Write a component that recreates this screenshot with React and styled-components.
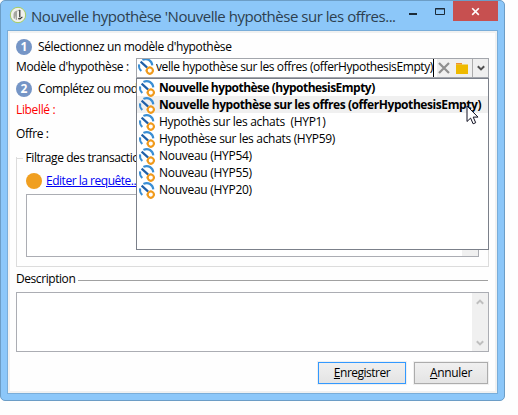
import React from "react";
import styled, { createGlobalStyle } from "styled-components";

const GlobalStyle = createGlobalStyle`
  * { box-sizing: border-box; }
  body { margin: 0; background: #fefefe; }
`;

const Dialog = styled.div`
  width: 505px;
  height: 401px;
  display: flex;
  flex-direction: column;
  padding: 0 6px 6px;
  background: #8cc7f9;
  border: 1px solid #6c9dc6;
  border-radius: 5px;
  font: 12px/17px "Open Sans", "Noto Sans", sans-serif;
  color: #000;
`;

const TitleBar = styled.header`
  flex: none;
  height: 29px;
  display: flex;
  align-items: flex-start;
`;

const AppIcon = styled.svg`
  width: 18px;
  height: 18px;
  margin: 5px 4px 0 2px;
  flex: none;
`;

const Title = styled.h1`
  margin: 4px 0 0;
  width: 390px;
  font-size: 15px;
  font-weight: 400;
  line-height: 22px;
  letter-spacing: -0.47px;
  white-space: pre;
  color: #2d3f50;
`;

const Controls = styled.svg`
  width: 93px;
  height: 20px;
  flex: none;
  margin-left: 4px;
`;

const Client = styled.main`
  flex: 1;
  display: flex;
  flex-direction: column;
  background: #fefefe;
  border: 1px solid #79add9;
  box-shadow: inset 0 0 0 2px #f0f1f1;
  padding: 7px 8px 0;
`;

const Text = styled.span`
  white-space: pre;
  letter-spacing: ${(p) => p.$track ?? -0.4}px;
  color: ${(p) => p.$color ?? "inherit"};
`;

const Step = styled.div`
  display: flex;
  align-items: flex-start;
  gap: 6px;
  height: 17px;
`;

const StepNumber = styled.span`
  width: 16px;
  height: 16px;
  margin-top: 1px;
  border-radius: 50%;
  background: #7595c6;
  color: #fff;
  font-weight: 700;
  font-size: 12px;
  line-height: 16px;
  text-align: center;
`;

const Field = styled.div`
  display: flex;
  height: ${(p) => p.$height ?? 17}px;
  margin-top: ${(p) => p.$gap}px;
`;

const FieldLabel = styled.div`
  width: 120px;
  flex: none;
`;

const Combo = styled.div`
  position: relative;
  flex: 1;
  display: flex;
  height: 20px;
  border: 1px solid #a3a6ac;
  background: #fff;
`;

const ComboValue = styled.div`
  width: 300px;
  display: flex;
  gap: 2px;
  overflow: hidden;
  padding-left: 1px;
`;

const ValueWindow = styled.div`
  width: 277px;
  height: 18px;
  margin-top: -1px;
  display: flex;
  justify-content: flex-end;
  overflow: hidden;
`;

const Caret = styled.span`
  width: 1px;
  height: 18px;
  background: #000;
  margin-left: -2px;
`;

const ComboTools = styled.div`
  width: 35px;
  display: flex;
  align-items: center;
  gap: 5px;
  padding: 0 0 0 1px;
  background: #f0f0f0;
`;

const ComboArrow = styled.div`
  flex: 1;
  display: flex;
  align-items: center;
  justify-content: center;
  background: #efefef;
  border-left: 1px solid #acacac;
`;

const Options = styled.ul`
  position: absolute;
  z-index: 1;
  top: 19px;
  left: -1px;
  width: 353px;
  height: 172px;
  margin: 0;
  padding: 0;
  list-style: none;
  background: #fff;
  border: 1px solid #7b808a;
`;

const Option = styled.li`
  display: flex;
  gap: 4px;
  height: 17px;
  padding-left: 2px;
  font-weight: ${(p) => (p.$bold ? 700 : 400)};
  background: ${(p) => (p.$active ? "#f0f0f0" : "transparent")};
`;

const GaugeSvg = styled.svg`
  width: 16px;
  height: 18px;
  flex: none;
  overflow: visible;
  margin-top: ${(p) => (p.$raised ? -2 : 0)}px;
`;

const Pointer = styled.svg`
  position: absolute;
  z-index: 2;
  left: 329px;
  top: 46px;
  width: 13px;
  height: 20px;
`;

const Group = styled.section`
  height: 117px;
  margin-top: 7px;
  display: flex;
  flex-direction: column;
`;

const GroupLegend = styled.div`
  height: 17px;
  display: flex;
  gap: 2.5px;
  margin-bottom: -9px;

  &::before,
  &::after {
    content: "";
    height: 9px;
    border-bottom: 1px solid #dcdcdc;
  }
  &::before { width: 7px; }
  &::after { flex: 1; }
`;

const GroupBody = styled.div`
  flex: 1;
  padding: 15px 9px 9px;
  border: solid #dcdcdc;
  border-width: 0 1px 1px;
  display: flex;
  flex-direction: column;
  gap: 4px;
`;

const LinkRow = styled.div`
  display: flex;
  align-items: flex-start;
  gap: 4px;
  height: 18px;
`;

const Dot = styled.i`
  width: 16px;
  height: 16px;
  border-radius: 50%;
  background: #f09f20;
  margin-top: 1px;
`;

const Link = styled.a`
  color: #0000f5;
  letter-spacing: -0.48px;
  text-decoration: underline;
  text-underline-offset: 1px;
`;

const TextArea = styled.div`
  height: ${(p) => p.$height}px;
  flex: none;
  display: flex;
  justify-content: flex-end;
  background: #fff;
  border: 1px solid #abadb3;
`;

const ScrollTrack = styled.div`
  width: 16px;
  display: flex;
  flex-direction: column;
  align-items: center;
  justify-content: space-between;
  padding: 6px 0 5px;
  background: #f0f0f0;
`;

const Separator = styled.div`
  display: flex;
  height: 17px;
  gap: 3px;
  margin: 4px 1px 5px 0;

  &::after {
    content: "";
    flex: 1;
    height: 10px;
    border-bottom: 1px solid #a0a0a0;
  }
`;

const Actions = styled.footer`
  display: flex;
  justify-content: flex-end;
  gap: 8px;
  padding-right: 1px;
  margin-top: 10px;
`;

const Button = styled.button`
  width: ${(p) => p.$width}px;
  height: 22px;
  padding: 0 0 2px;
  font: inherit;
  line-height: 17px;
  letter-spacing: ${(p) => p.$track}px;
  color: #000;
  background: linear-gradient(#f0f0f0, #e4e4e4);
  border: 1px solid ${(p) => (p.$primary ? "#3399ff" : "#acacac")};
  box-shadow: 0 0 0 1px #f0f0f0;
`;

const Gauge = ({ raised }) => (
  <GaugeSvg $raised={raised} viewBox="0 0 16 18" fill="none">
    <path d="M4.4 2.9C9.2.6 13.9 3.6 14.3 8.4" stroke="#3a8ed4" strokeWidth="2.1" />
    <path d="M2.6 4.6 9.2 10.6" stroke="#1f5fa8" strokeWidth="2.1" />
    <path d="M1.1 7.4c-.5 2.6.4 4.9 2.2 6.5" stroke="#3a8ed4" strokeWidth="2" />
    <circle cx="11.8" cy="13.6" r="3.1" fill="#fff" stroke="#f09a1c" strokeWidth="2.1" />
    <path d="M11.8 9.4v1M11.8 16.8v.9M7.6 13.6h1M15 13.6h1" stroke="#f09a1c" strokeWidth="1.8" />
  </GaugeSvg>
);

const Chevron = ({ up, color }) => (
  <svg width="8" height="6" viewBox="0 0 8 6" fill="none">
    <path d={up ? "M.8 4.8 4 1.6l3.2 3.2" : "M.8 1.2 4 4.4l3.2-3.2"} stroke={color} strokeWidth="2" />
  </svg>
);

const options = [
  { label: "Nouvelle hypothèse (hypothesisEmpty)", bold: true, track: -0.52 },
  { label: "Nouvelle hypothèse sur les offres (offerHypothesisEmpty)", bold: true, active: true, track: -0.42 },
  { label: "Hypothès sur les achats  (HYP1)", track: -0.3 },
  { label: "Hypothèse sur les achats (HYP59)", track: -0.32 },
  { label: "Nouveau (HYP54)", track: -0.28 },
  { label: "Nouveau (HYP55)", track: -0.28 },
  { label: "Nouveau (HYP20)", track: -0.28 },
];

export default function App() {
  return (
    <>
      <GlobalStyle />
      <Dialog>
        <TitleBar>
          <AppIcon viewBox="0 0 18 18">
            <circle cx="9" cy="9" r="7.7" fill="#f0f0ec" stroke="#a4cc62" strokeWidth="1" />
            <path d="M4.5 8C5 6 6.5 5 8 4.6V14l-1.4-.6V9.5L5.8 13l-1.3-1z" fill="#a5a5a0" />
            <path d="M8.4 5 10.6 3.8" fill="none" stroke="#a5a5a0" strokeWidth="1" />
            <path d="M10.8 4v7.2M9.2 12.6l1.8.3 2.4-2" fill="none" stroke="#30302d" strokeWidth="1.2" />
          </AppIcon>
          <Title>Nouvelle hypothèse 'Nouvelle hypothèse sur les offres...</Title>
          <Controls viewBox="0 0 93 20">
            <path d="M4 13h8" stroke="#1c2b38" strokeWidth="2" />
            <path d="M30.5 7.5h9v6h-9zM30 8h10" fill="none" stroke="#1c2b38" />
            <path d="M48 0h45v20H48z" fill="#c75050" />
            <path d="m67.2 7.3 6.6 6.6m0-6.6-6.6 6.6" stroke="#fff" strokeWidth="1.6" />
          </Controls>
        </TitleBar>

        <Client>
          <Step>
            <StepNumber>1</StepNumber>
            <Text $track={-0.35}>Sélectionnez un modèle d'hypothèse</Text>
          </Step>

          <Field $gap={3} $height={20}>
            <FieldLabel><Text $track={-0.36}>Modèle d'hypothèse :</Text></FieldLabel>
            <Combo>
              <ComboValue>
                <Gauge raised />
                <ValueWindow>
                  <Text $track={-0.39}>Nouvelle hypothèse sur les offres (offerHypothesisEmpty)</Text>
                </ValueWindow>
                <Caret />
              </ComboValue>
              <ComboTools>
                <svg width="12" height="12" viewBox="0 0 12 12">
                  <path d="m1 1 10 10M11 1 1 11" stroke="#8f8f8f" strokeWidth="2.2" />
                </svg>
                <svg width="13" height="13" viewBox="0 0 13 13">
                  <path d="M1 1h6v1.6H1z" fill="#ef9030" />
                  <path d="M1 2.5h12V12H1z" fill="#efba00" />
                </svg>
              </ComboTools>
              <ComboArrow><Chevron color="#505050" /></ComboArrow>
              <Options>
                {options.map((o) => (
                  <Option key={o.label} $bold={o.bold} $active={o.active}>
                    <Gauge />
                    <Text $track={o.track}>{o.label}</Text>
                  </Option>
                ))}
              </Options>
              <Pointer viewBox="0 0 13 20">
                <path d="M1 1v15.5l3.6-3.4 2.5 5.7 2.6-1.1-2.5-5.6H12z" fill="#fff" stroke="#111122" />
              </Pointer>
            </Combo>
          </Field>

          <Field $gap={2}>
            <Step>
              <StepNumber>2</StepNumber>
              <Text $track={-0.4}>Complétez ou modifiez</Text>
            </Step>
          </Field>

          <Field $gap={4}><Text $track={-0.35} $color="#ff0000">Libellé :</Text></Field>
          <Field $gap={7}><Text $track={-0.4}>Offre :</Text></Field>

          <Group>
            <GroupLegend><Text $track={-0.42}>Filtrage des transactions</Text></GroupLegend>
            <GroupBody>
              <LinkRow>
                <Dot />
                <Link>Editer la requête...</Link>
              </LinkRow>
              <TextArea $height={63}><ScrollTrack /></TextArea>
            </GroupBody>
          </Group>

          <Separator><Text $track={-0.43}>Description</Text></Separator>
          <TextArea $height={60}>
            <ScrollTrack>
              <Chevron up color="#bfbfbf" />
              <Chevron color="#bfbfbf" />
            </ScrollTrack>
          </TextArea>

          <Actions>
            <Button $primary $width={88} $track={-0.5}><u>E</u>nregistrer</Button>
            <Button $width={74} $track={-0.33}><u>A</u>nnuler</Button>
          </Actions>
        </Client>
      </Dialog>
    </>
  );
}
